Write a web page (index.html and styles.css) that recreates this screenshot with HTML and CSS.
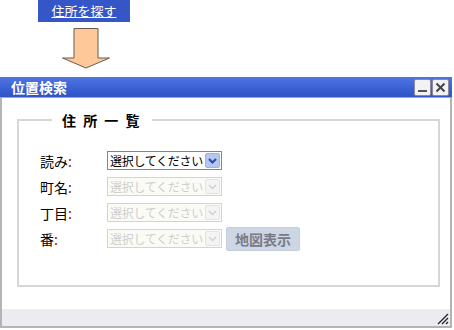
FILE: index.html
```html
<!DOCTYPE html>
<html lang="ja">
<head>
  <meta charset="UTF-8" />
  <title>位置検索</title>
  <link rel="stylesheet" href="styles.css">
</head>
<body>
  <a class="findLink" href="#">住所を探す</a>

  <svg class="arrow" width="50" height="42" viewBox="0 0 50 42">
    <polygon points="13,1.5 37,1.5 37,31 48.5,31 25,41 1.5,31 13,31" fill="#ffc898" stroke="#6a5a50" stroke-width="1"/>
  </svg>

  <div class="window">
    <div class="titleBar">
      <span class="title">位置検索</span>
      <span class="winBtns">
        <span class="winBtn">
          <svg width="15" height="15" viewBox="0 0 15 15"><rect x="3" y="10" width="9" height="2" fill="#555"/></svg>
        </span>
        <span class="winBtn">
          <svg width="15" height="15" viewBox="0 0 15 15"><path d="M3.5 3.5 L11.5 11.5 M11.5 3.5 L3.5 11.5" stroke="#444" stroke-width="2"/></svg>
        </span>
      </span>
    </div>

    <div class="content">
      <fieldset class="addrBox">
        <legend>住 所 一 覧</legend>
        <div class="row">
          <label>読み<span class="colon">:</span></label>
          <span class="selWrap">
            <select class="sel"><option>選択してください</option></select>
            <span class="selArrow"><svg width="9" height="6" viewBox="0 0 9 6"><path d="M1 1 L4.5 4.5 L8 1" fill="none" stroke="#2a4aa8" stroke-width="2"/></svg></span>
          </span>
        </div>
        <div class="row">
          <label>町名<span class="colon">:</span></label>
          <span class="selWrap off">
            <select class="sel" disabled><option>選択してください</option></select>
            <span class="selArrow"><svg width="9" height="6" viewBox="0 0 9 6"><path d="M1 1 L4.5 4.5 L8 1" fill="none" stroke="#d0d0d8" stroke-width="1.5"/></svg></span>
          </span>
        </div>
        <div class="row">
          <label>丁目<span class="colon">:</span></label>
          <span class="selWrap off">
            <select class="sel" disabled><option>選択してください</option></select>
            <span class="selArrow"><svg width="9" height="6" viewBox="0 0 9 6"><path d="M1 1 L4.5 4.5 L8 1" fill="none" stroke="#d0d0d8" stroke-width="1.5"/></svg></span>
          </span>
        </div>
        <div class="row">
          <label>番<span class="colon">:</span></label>
          <span class="selWrap off">
            <select class="sel" disabled><option>選択してください</option></select>
            <span class="selArrow"><svg width="9" height="6" viewBox="0 0 9 6"><path d="M1 1 L4.5 4.5 L8 1" fill="none" stroke="#d0d0d8" stroke-width="1.5"/></svg></span>
          </span>
          <button class="mapBtn" disabled>地図表示</button>
        </div>
      </fieldset>
    </div>

    <div class="statusBar">
      <svg class="grip" width="12" height="12" viewBox="0 0 12 12">
        <path d="M1 11 L11 1 M5 11 L11 5 M9 11 L11 9" stroke="#222" stroke-width="1.3"/>
      </svg>
    </div>
  </div>
</body>
</html>
```

FILE: styles.css
```css
body {
  margin: 0;
  background: #fff;
  font-family: "Noto Sans CJK JP", "DejaVu Sans", sans-serif;
  font-size: 13px;
  color: #000;
}
.findLink {
  display: block;
  width: 92px;
  height: 22px;
  margin-left: 38px;
  background: #3456c6;
  color: #fff;
  text-align: center;
  line-height: 21px;
  font-size: 13px;
  text-decoration: underline;
}
.arrow {
  display: block;
  margin: 5px 0 0 61px;
}
.window {
  margin-top: 8px;
  width: 448px;
  height: 249px;
  border: 2px solid #b4b4b8;
  border-top: none;
  display: flex;
  flex-direction: column;
}
.titleBar {
  height: 20px;
  background: linear-gradient(#4f75e2, #3a5fd2 60%, #2f54c4);
  border-bottom: 1px solid #a8a8b0;
  display: flex;
  align-items: center;
  justify-content: space-between;
  padding-left: 11px;
  margin-left: -2px;
  margin-right: -2px;
}
.title {
  color: #fff;
  font-weight: bold;
  font-size: 14px;
}
.winBtns {
  display: flex;
  gap: 1px;
  margin-right: 3px;
}
.winBtn {
  display: block;
  width: 15px;
  height: 15px;
  background: #f2f2f4;
  border: 1px solid #8a8aa0;
  border-radius: 2px;
}
.winBtn svg {
  display: block;
}
.content {
  flex: 1;
  background: #fff;
  padding: 15px 10px 0 15px;
}
.addrBox {
  margin: 0;
  height: 174px;
  box-sizing: border-box;
  border: 2px solid #d6d6d8;
  padding: 24px 0 0 21px;
}
.addrBox legend {
  margin-left: 12px;
  padding: 0 10px;
  font-weight: bold;
  font-size: 14px;
  line-height: 14px;
  letter-spacing: 2px;
}
.row {
  display: flex;
  align-items: center;
  height: 19px;
  margin-bottom: 7px;
}
.row label {
  width: 67px;
  font-size: 14px;
}
.colon {
  color: #8a1010;
}
.selWrap {
  display: flex;
  align-items: center;
  width: 113px;
  height: 17px;
  border: 1px solid #6f8aa8;
  background: #fff;
}
.sel {
  appearance: none;
  flex: 1;
  min-width: 0;
  height: 17px;
  border: none;
  background: transparent;
  font-family: inherit;
  font-size: 12px;
  letter-spacing: -0.3px;
  padding: 0 0 0 2px;
  color: #000;
}
.selArrow {
  display: flex;
  align-items: center;
  justify-content: center;
  width: 15px;
  height: 15px;
  margin-right: 1px;
  background: #b4c6f2;
  border: 1px solid #9fb2e0;
  box-sizing: border-box;
  border-radius: 2px;
}
.selWrap.off {
  border-color: #d4d4cc;
  background: #fbfbf6;
}
.selWrap.off .sel {
  color: #bcbcbc;
}
.selWrap.off .selArrow {
  background: #f4f4f4;
  border-color: #e4e4e4;
}
.mapBtn {
  margin-left: 4px;
  width: 74px;
  height: 24px;
  font-family: inherit;
  font-size: 14px;
  font-weight: bold;
  color: #7a7a86;
  background: #cdd6e4;
  border: 1px solid #c4cede;
  border-radius: 2px;
  padding: 0;
}
.statusBar {
  height: 17px;
  background: #ececf0;
  display: flex;
  justify-content: flex-end;
  align-items: flex-end;
}
.grip {
  display: block;
  margin: 0 1px 1px 0;
}
```
